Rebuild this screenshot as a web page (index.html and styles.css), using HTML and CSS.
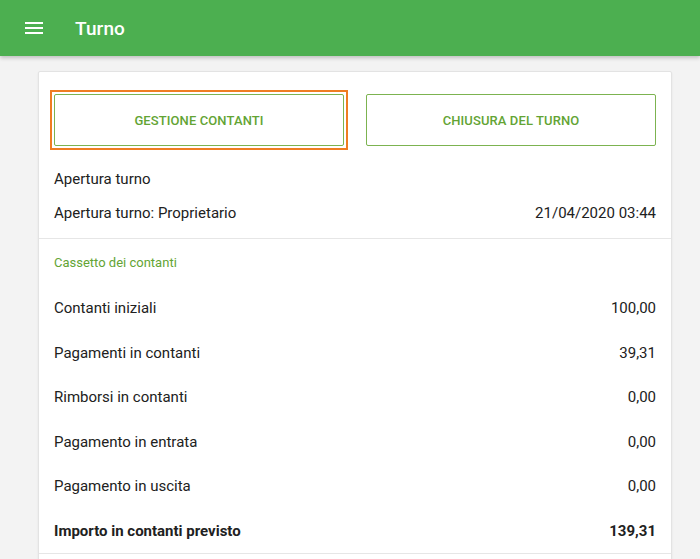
FILE: index.html
```html
<!DOCTYPE html>
<html lang="it">
<head>
<meta charset="utf-8">
<title>Turno</title>
<link rel="stylesheet" href="styles.css">
</head>
<body>
<header class="appbar">
  <svg class="menu-icon" width="24" height="24" viewBox="0 0 24 24" aria-hidden="true">
    <rect x="3" y="6" width="18" height="2" fill="#fff"/>
    <rect x="3" y="11" width="18" height="2" fill="#fff"/>
    <rect x="3" y="16" width="18" height="2" fill="#fff"/>
  </svg>
  <h1 class="title">Turno</h1>
</header>
<main class="page">
  <section class="card">
    <div class="actions">
      <div class="focus-ring"><button class="btn">GESTIONE CONTANTI</button></div>
      <div class="btn-slot"><button class="btn">CHIUSURA DEL TURNO</button></div>
    </div>
    <div class="info">
      <div class="info-row"><span>Apertura turno</span></div>
      <div class="info-row"><span>Apertura turno: Proprietario</span><span>21/04/2020 03:44</span></div>
    </div>
    <div class="section">
      <div class="section-title">Cassetto dei contanti</div>
      <div class="row"><span>Contanti iniziali</span><span>100,00</span></div>
      <div class="row"><span>Pagamenti in contanti</span><span>39,31</span></div>
      <div class="row"><span>Rimborsi in contanti</span><span>0,00</span></div>
      <div class="row"><span>Pagamento in entrata</span><span>0,00</span></div>
      <div class="row"><span>Pagamento in uscita</span><span>0,00</span></div>
      <div class="row row-total"><span>Importo in contanti previsto</span><span>139,31</span></div>
    </div>
    <div class="section-rest"></div>
  </section>
</main>
</body>
</html>
```
FILE: styles.css
```css
html, body {
  margin: 0;
  padding: 0;
  overflow: hidden;
  height: 100%;
}
body {
  background: #f3f3f3;
  font-family: Roboto, "Noto Sans", Arial, sans-serif;
  color: #212121;
}
.appbar {
  height: 56px;
  background: #4caf50;
  display: flex;
  align-items: center;
  padding-left: 22px;
  box-shadow: 0 2px 4px rgba(0,0,0,0.22);
  position: relative;
  z-index: 1;
}
.menu-icon {
  display: block;
}
.title {
  margin: 0 0 0 29px;
  font-size: 19px;
  font-weight: 500;
  color: #fff;
  letter-spacing: 0.1px;
}
.page {
  padding: 15px 0 0 38px;
}
.card {
  width: 632px;
  background: #fff;
  border: 1px solid #e3e3e3;
  border-radius: 2px;
  box-shadow: 0 1px 2px rgba(0,0,0,0.08);
}
.actions {
  display: flex;
  gap: 22px;
  padding: 22px 15px 0 15px;
}
.focus-ring,
.btn-slot {
  flex: 1;
  display: flex;
}
.focus-ring {
  margin: -4px;
  padding: 2px;
  border: 2px solid #ef7d22;
}
.btn {
  flex: 1;
  height: 52px;
  background: #fff;
  border: 1px solid #7cb350;
  border-radius: 2px;
  color: #63a434;
  font-family: Roboto, "Noto Sans", Arial, sans-serif;
  font-size: 13px;
  font-weight: 500;
  letter-spacing: 0.1px;
  padding: 0;
}
.info {
  padding: 16px 15px 8px 15px;
  border-bottom: 1px solid #e6e6e6;
}
.info-row {
  height: 34px;
  display: flex;
  align-items: center;
  justify-content: space-between;
  font-size: 15px;
}
.section {
  padding: 0 15px;
  border-bottom: 1px solid #e6e6e6;
}
.section-title {
  height: 47px;
  display: flex;
  align-items: center;
  font-size: 13px;
  color: #63a434;
}
.row {
  height: 44.5px;
  display: flex;
  align-items: center;
  justify-content: space-between;
  font-size: 15px;
}
.row-total {
  font-weight: 700;
}
.section-rest {
  height: 40px;
}
```
